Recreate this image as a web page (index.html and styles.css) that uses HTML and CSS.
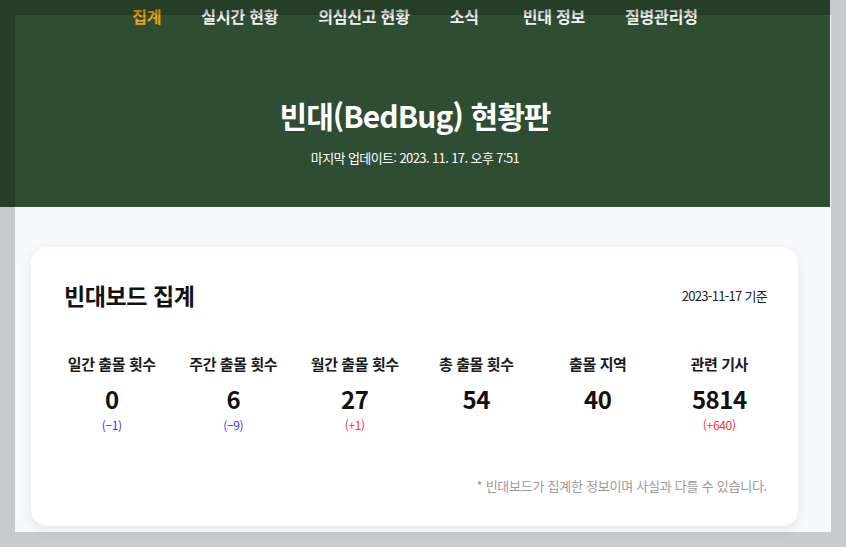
FILE: index.html
```html
<!DOCTYPE html>
<html lang="ko">
<head>
<meta charset="utf-8">
<link rel="stylesheet" href="styles.css">
</head>
<body>
<div class="page">
  <header class="hero">
    <nav class="nav">
      <a class="nav-item active">집계</a>
      <a class="nav-item">실시간 현황</a>
      <a class="nav-item">의심신고 현황</a>
      <a class="nav-item">소식</a>
      <a class="nav-item">빈대 정보</a>
      <a class="nav-item">질병관리청</a>
    </nav>
    <h1 class="title">빈대(BedBug) 현황판</h1>
    <p class="updated">마지막 업데이트: 2023. 11. 17. 오후 7:51</p>
  </header>
  <main class="content">
    <section class="card">
      <div class="card-head">
        <h2 class="card-title">빈대보드 집계</h2>
        <span class="card-date">2023-11-17 기준</span>
      </div>
      <div class="stats">
        <div class="stat"><div class="stat-label">일간 출몰 횟수</div><div class="stat-value">0</div><div class="stat-diff down">(−1)</div></div>
        <div class="stat"><div class="stat-label">주간 출몰 횟수</div><div class="stat-value">6</div><div class="stat-diff down">(−9)</div></div>
        <div class="stat"><div class="stat-label">월간 출몰 횟수</div><div class="stat-value">27</div><div class="stat-diff up">(+1)</div></div>
        <div class="stat"><div class="stat-label">총 출몰 횟수</div><div class="stat-value">54</div><div class="stat-diff"></div></div>
        <div class="stat"><div class="stat-label">출몰 지역</div><div class="stat-value">40</div><div class="stat-diff"></div></div>
        <div class="stat"><div class="stat-label">관련 기사</div><div class="stat-value">5814</div><div class="stat-diff up">(+640)</div></div>
      </div>
      <p class="note">* 빈대보드가 집계한 정보이며 사실과 다를 수 있습니다.</p>
    </section>
  </main>
</div>
<div class="focus"></div>
</body>
</html>
```
FILE: styles.css
```css
html, body {
  margin: 0;
  padding: 0;
  height: 100%;
  overflow: hidden;
  background: #f8f9fd;
}
body {
  font-family: "Noto Sans CJK KR", "Noto Sans", sans-serif;
  color: #111;
  position: relative;
}
.page {
  width: 830px;
}
.hero {
  background: #2f4d32;
  height: 207px;
  display: flex;
  flex-direction: column;
  align-items: center;
  box-sizing: border-box;
}
.nav {
  display: flex;
  gap: 40px;
  height: 32px;
  align-items: center;
}
.nav-item {
  color: #f2f2f2;
  font-size: 16px;
  font-weight: 700;
  letter-spacing: -0.2px;
  text-decoration: none;
}
.nav-item:nth-child(4) {
  margin-right: 4px;
}
.nav-item.active {
  color: #f0a30a;
}
.title {
  margin: 63px 0 0;
  color: #fff;
  font-size: 30px;
  font-weight: 700;
  letter-spacing: -0.9px;
  line-height: 40px;
}
.updated {
  margin: 14px 0 0;
  color: #fff;
  font-size: 13px;
  letter-spacing: -0.6px;
  line-height: 18px;
}
.content {
  padding: 40px 32px 40px 31px;
}
.card {
  background: #fff;
  border-radius: 16px;
  box-shadow: 0 4px 14px rgba(0, 0, 0, 0.08);
  padding: 32px 31px 30px 33px;
  height: 279px;
  box-sizing: border-box;
}
.card-head {
  display: flex;
  justify-content: space-between;
  align-items: center;
}
.card-title {
  margin: 0;
  font-size: 23px;
  font-weight: 700;
  letter-spacing: -0.4px;
  line-height: 32px;
}
.card-date {
  font-size: 13px;
  letter-spacing: -0.7px;
  color: #222;
}
.stats {
  display: grid;
  grid-template-columns: repeat(6, 1fr);
  margin: 42px -13px 0 -13px;
}
.stat {
  display: flex;
  flex-direction: column;
  align-items: center;
}
.stat-label {
  font-size: 15px;
  font-weight: 700;
  letter-spacing: -0.4px;
  line-height: 22px;
  color: #1a1a1a;
}
.stat-value {
  margin-top: 9px;
  font-size: 24px;
  font-weight: 700;
  line-height: 30px;
  letter-spacing: -0.5px;
}
.stat-diff {
  font-size: 12px;
  line-height: 16px;
  height: 16px;
  margin-top: 3px;
  letter-spacing: -0.3px;
}
.stat-diff.down { color: #3333ff; }
.stat-diff.up { color: #ff3333; }
.note {
  margin: 43px 0 0;
  text-align: right;
  font-size: 13px;
  color: #9a9a9a;
  letter-spacing: -0.25px;
}
.focus {
  position: absolute;
  left: 15px;
  top: 15px;
  width: 816px;
  height: 517px;
  box-shadow: 0 0 0 3000px rgba(0, 0, 0, 0.19);
  pointer-events: none;
}
```
